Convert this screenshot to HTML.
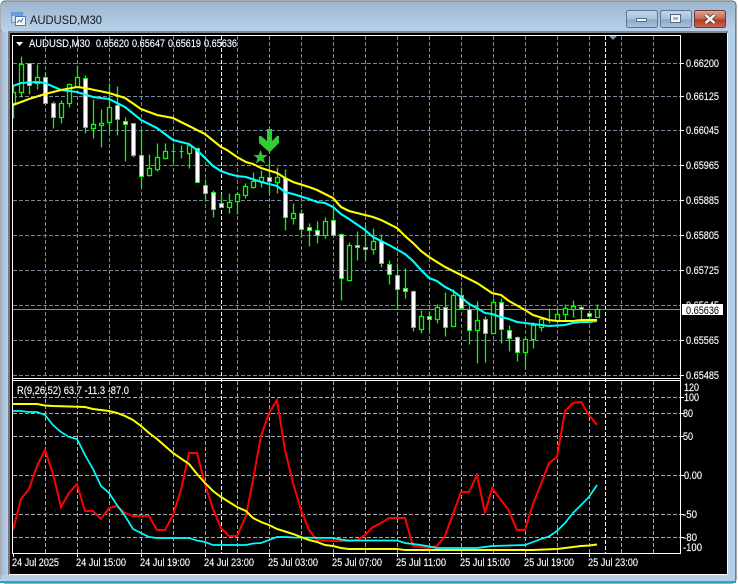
<!DOCTYPE html>
<html lang="en"><head><meta charset="utf-8"><title>AUDUSD,M30</title>
<style>html,body{margin:0;padding:0;background:#fff;width:738px;height:584px;overflow:hidden}svg{display:block}text{font-family:"Liberation Sans",sans-serif;font-size:11px;fill:#fff;stroke:#d8ecff;stroke-width:.18px}</style></head>
<body>
<svg width="738" height="584" viewBox="0 0 738 584" xmlns="http://www.w3.org/2000/svg">
<defs>
<linearGradient id="tb" x1="0" y1="0" x2="0" y2="1"><stop offset="0" stop-color="#9bb4d0"/><stop offset="1" stop-color="#bad2eb"/></linearGradient>
<linearGradient id="sd" x1="0" y1="0" x2="1" y2="0"><stop offset="0" stop-color="#9db6d3"/><stop offset="1" stop-color="#bfd5ec"/></linearGradient>
<linearGradient id="bt" x1="0" y1="0" x2="0" y2="1"><stop offset="0" stop-color="#c3d5e8"/><stop offset=".5" stop-color="#a9c1da"/><stop offset=".55" stop-color="#8ba8c7"/><stop offset="1" stop-color="#a9c4df"/></linearGradient>
<linearGradient id="cl" x1="0" y1="0" x2="0" y2="1"><stop offset="0" stop-color="#dfa79b"/><stop offset=".5" stop-color="#c4634f"/><stop offset=".55" stop-color="#ac3a26"/><stop offset="1" stop-color="#cf6a50"/></linearGradient>
<clipPath id="mc"><rect x="13" y="36" width="667" height="342"/></clipPath>
<clipPath id="sc"><rect x="13" y="381" width="667" height="172"/></clipPath>
</defs>
<rect width="738" height="584" fill="#fff"/>
<rect x="1" y="1" width="735" height="582" rx="4" fill="#b9d1ea" stroke="#55595e"/>
<rect x="1" y="2" width="734" height="30" rx="3" fill="url(#tb)"/>
<rect x="1" y="32" width="8" height="549" fill="url(#sd)"/>
<rect x="728" y="32" width="7" height="549" fill="#b2d0ee"/>
<rect x="1" y="575" width="734" height="6" fill="#b9cfe8"/>
<rect x="0" y="581" width="736" height="2" fill="#2ba3c4"/>
<rect x="735" y="8" width="1" height="574" fill="#4d8fb0"/>
<rect x="8" y="31" width="720" height="2" fill="#7f8790"/>
<rect x="8" y="32" width="2" height="543" fill="#75787c"/>
<rect x="727" y="33" width="1" height="542" fill="#fff"/>
<rect x="9" y="574" width="719" height="1" fill="#fff"/>
<rect x="10" y="33" width="717" height="541" fill="#000"/>
<!-- title icon -->
<rect x="11.5" y="12.5" width="11" height="10" fill="#c6dcf3" stroke="#5f93d0"/>
<rect x="15.5" y="16.5" width="10" height="9" fill="#fff" stroke="#3f7dc6"/>
<path d="M17 23l2-3 2 2 2-4" fill="none" stroke="#3d74b8"/>
<rect x="12" y="13" width="10" height="3" fill="#6f9fd8"/>
<text x="30" y="24" textLength="72" lengthAdjust="spacingAndGlyphs" style="font-size:12px;fill:#14181e;stroke:none">AUDUSD,M30</text>
<!-- buttons -->
<rect x="626.5" y="10.5" width="31" height="17" rx="2" fill="url(#bt)" stroke="#5b7593"/>
<rect x="636.5" y="18.5" width="10" height="3" fill="#f3f6fa" stroke="#5f6f80"/>
<rect x="660.5" y="10.5" width="31" height="17" rx="2" fill="url(#bt)" stroke="#5b7593"/>
<rect x="670.5" y="14.5" width="10" height="8" fill="#f3f6fa" stroke="#5a6878"/>
<rect x="673" y="17" width="5" height="3" fill="#9db6d0"/>
<rect x="694.5" y="10.5" width="31" height="17" rx="2" fill="url(#cl)" stroke="#6b3b38"/>
<path d="M705.5 15l9 8M714.5 15l-9 8" stroke="#3f2a2a" stroke-width="4"/>
<path d="M705.5 15l9 8M714.5 15l-9 8" stroke="#f4f4f4" stroke-width="2.6"/>
<!-- grid -->
<g fill="none" stroke="#77889a" stroke-dasharray="4 2" shape-rendering="crispEdges">
<path d="M13 63.5H680M13 96.5H680M13 130.5H680M13 165.5H680M13 200.5H680M13 235.5H680M13 270.5H680M13 305.5H680M13 340.5H680M13 375.5H680"/>
<path d="M45.5 36V378M77.5 36V378M109.5 36V378M141.5 36V378M173.5 36V378M205.5 36V378M237.5 36V378M269.5 36V378M301.5 36V378M333.5 36V378M365.5 36V378M397.5 36V378M429.5 36V378M461.5 36V378M493.5 36V378M525.5 36V378M557.5 36V378M589.5 36V378M621.5 36V378M653.5 36V378"/>
</g>
<g fill="none" stroke="#a3abb3" stroke-dasharray="4 2" shape-rendering="crispEdges">
<path d="M13 397.5H680M13 413.5H680M13 436.5H680M13 475.5H680M13 514.5H680M13 537.5H680"/>
<path d="M45.5 381V553M77.5 381V553M109.5 381V553M141.5 381V553M173.5 381V553M205.5 381V553M237.5 381V553M269.5 381V553M301.5 381V553M333.5 381V553M365.5 381V553M397.5 381V553M429.5 381V553M461.5 381V553M493.5 381V553M525.5 381V553M557.5 381V553M589.5 381V553M621.5 381V553M653.5 381V553"/>
</g>
<g fill="none" stroke="#fff" stroke-dasharray="4 2" shape-rendering="crispEdges">
<path d="M221.5 36V553M605.5 36V553"/>
</g>
<path d="M13 309.5H680" stroke="#868d95" shape-rendering="crispEdges"/>
<path d="M609 36h8l-4 4z" fill="#7d8c9c"/>
<!-- candles -->
<g clip-path="url(#mc)">
<g transform="translate(.5 .5)" stroke="#00ff00" stroke-width="1" stroke-linejoin="miter" shape-rendering="crispEdges">
<path fill="none" stroke-width="1.3" shape-rendering="auto" d="M13 84V118M21 56V97M29 63V94M37 64V89M45 72V103M53 101V128M61 100V123M69 83V107M77 65V87M85 75V133M93 99V138M101 109V147M109 83V132M117 86V135M125 117V161M133 123V157M141 130V187M149 154V176M157 143V171M165 143V159M173 143V163M181 145V158M189 145V168M197 148V182M205 179V200M213 190V217M221 193V207M229 193V213M237 192V214M245 183V198M253 172V188M261 170V187M269 159V193M277 167V193M285 169V230M293 203V224M301 209V237M309 223V246M317 221V243M325 217V238M333 208V236M341 233V300M349 242V281M357 231V260M365 225V260M373 228V254M381 234V267M389 260V284M397 263V309M405 268V298M413 290V331M421 310V333M429 311V331M437 304V323M445 292V336M453 289V326M461 287V308M469 302V344M477 301V363M485 316V362M493 298V333M501 298V343M509 325V351M517 336V361M525 337V368M533 322V348M541 317V331M549 308V323M557 308V323M565 304V320M573 300V317M581 305V319M589 310V322M597 304V317"/>
<path fill="#000" stroke-width="1.3" shape-rendering="auto" d="M11 92h4V103h-4zM19 64h4V92h-4zM35 77h4V83h-4zM59 103h4V117h-4zM67 84h4V103h-4zM75 77h4V87h-4zM91 124h4V128h-4zM99 123h4V125h-4zM107 107h4V122h-4zM147 168h4V175h-4zM155 157h4V169h-4zM163 151h4V158h-4zM187 145h4V153h-4zM227 202h4V207h-4zM235 194h4V201h-4zM243 186h4V195h-4zM251 181h4V187h-4zM259 177h4V181h-4zM275 177h4V182h-4zM291 213h4V218h-4zM323 221h4V235h-4zM347 245h4V280h-4zM371 241h4V249h-4zM419 316h4V329h-4zM435 307h4V319h-4zM451 295h4V326h-4zM475 320h4V330h-4zM491 302h4V333h-4zM523 339h4V352h-4zM531 325h4V339h-4zM539 319h4V327h-4zM555 314h4V320h-4zM563 308h4V314h-4zM571 306h4V309h-4zM595 309h4V317h-4z"/>
<path fill="none" d="M171 151h4M179 151h4M547 320h4"/>
<path fill="#fff" d="M27 63h4V85h-4zM43 77h4V103h-4zM51 103h4V117h-4zM83 78h4V127h-4zM115 105h4V119h-4zM123 121h4V124h-4zM131 123h4V155h-4zM139 155h4V176h-4zM195 148h4V182h-4zM203 185h4V193h-4zM211 192h4V209h-4zM219 203h4V207h-4zM267 177h4V181h-4zM283 178h4V217h-4zM299 213h4V229h-4zM307 227h4V230h-4zM315 230h4V235h-4zM331 220h4V235h-4zM339 234h4V278h-4zM355 245h4V247h-4zM363 247h4V249h-4zM379 241h4V263h-4zM387 264h4V274h-4zM395 275h4V289h-4zM403 288h4V291h-4zM411 291h4V327h-4zM427 316h4V319h-4zM443 307h4V327h-4zM459 295h4V308h-4zM467 309h4V330h-4zM483 319h4V333h-4zM499 302h4V329h-4zM507 330h4V338h-4zM515 337h4V352h-4zM579 307h4V309h-4zM587 313h4V316h-4z"/>
</g>
<polyline fill="none" stroke="#00ffff" stroke-width="2.1" points="13,86 21,83 37,82 45,83 61,90 77,92 93,97 109,99 125,107 141,120 157,128 173,140 189,144 197,150 205,158 213,166 221,171 229,174 237,176 246,177 261,182 277,186 285,192 293,194 309,199 317,202 325,203 333,207 341,214 349,219 365,230 373,237 381,241 389,245 405,254 413,261 421,270 429,278 437,281 445,287 453,291 461,297 469,304 477,308 485,313 492,314 501,317 509,319 517,322 525,323 533,324 549,326 565,325 573,323 581,322 589,322 597,321"/>
<polyline fill="none" stroke="#ffff00" stroke-width="2.1" points="13,105 29,99 45,94 61,90 77,87 85,88 109,93 125,98 141,109 157,115 173,118 189,126 205,134 221,147 227,150 237,157 246,162 253,164 261,168 277,173 285,178 293,182 309,187 317,190 333,198 341,207 349,211 357,213 373,217 381,220 397,228 405,236 413,243 421,251 429,257 445,267 461,275 477,283 492,293 501,295 509,301 525,310 533,315 549,320 557,321 573,321 581,320 597,320"/>
</g>
<!-- arrow + star -->
<path d="M267 129h5V141l5-5h2V143L270 152h-1L259 143V136h2l6 5z" fill="#2fce35"/>
<path d="M260.500 150l2 5h5l-4 3.400 1.600 5.100-4.600-3-4.600 3 1.600-5.100-4-3.400h5z" fill="#33c03a"/>
<!-- indicator -->
<g clip-path="url(#sc)" fill="none">
<polyline stroke="#ff0000" stroke-width="2" points="13,530 21,499 29,489 37,466 45,450 53,474 61,507 69,493 77,484 85,511 93,511 101,519 109,508 117,506 125,513 133,516 149,516 157,530 165,530 173,515 181,490 189,453 197,453 205,484 213,509 221,528 229,536 237,536 246,516 253,480 261,436 269,413 277,400 285,450 293,483 301,510 309,530 317,540 333,541 349,541 357,540 365,535 373,527 381,523 389,518 405,518 413,546 421,547 429,548 437,546 445,536 453,514 461,492 469,492 477,475 485,513 492,488 501,500 508,509 517,530 525,530 533,504 541,484 549,463 557,457 565,411 573,403 581,402 589,415 597,425"/>
<polyline stroke="#00ffff" stroke-width="1.7" points="13,411 21,411 29,412 37,412 45,415 53,425 61,432 69,437 77,439 85,455 93,469 101,486 109,493 117,505 125,516 133,529 141,533 149,537 157,538 189,538 197,540.500 205,542 213,545 246,545 253,543.500 261,543 269,540 277,537 285,537 293,537.500 333,538 341,539.500 349,540.500 397,540.500 405,543 421,545 437,548 477,548 485,547 492,546 525,545 533,542 541,539 549,536.500 557,531 565,523 573,513 581,505 589,497 597,485"/>
<polyline stroke="#ffff00" stroke-width="2" points="13,404 37,404 45,405.500 53,406 85,407 93,409 109,411 117,413 125,416 133,420 141,426 149,433 157,439 173,453 189,464 197,474 205,483 213,491 221,497 237,507 246,511 253,518 261,522 269,525 277,529 293,534 309,540 317,542 325,545 333,546 341,548 349,549 397,549 405,550 533,550 557,549 565,548 573,547 581,546 589,545.500 597,544.500"/>
</g>
<!-- frames -->
<g stroke="#fff" fill="none" shape-rendering="crispEdges">
<path d="M12.500 35V553.500M12 35.500H681M680.500 35V554M12 378.500H681M12 380.500H681M12 553.500H681"/>
<path d="M681 63.500h3M681 96.500h3M681 130.500h3M681 165.500h3M681 200.500h3M681 235.500h3M681 270.500h3M681 340.500h3M681 375.500h3M681 397.500h3M681 413.500h3M681 436.500h3M681 475.500h3M681 514.500h3M681 537.500h3"/>
<path d="M13.500 554v3M77.500 554v3M141.500 554v3M205.500 554v3M269.500 554v3M333.500 554v3M397.500 554v3M461.500 554v3M525.500 554v3M589.500 554v3"/>
</g>
<!-- header text -->
<path d="M16 42h7l-3.500 4z" fill="#fff"/>
<text x="29" y="47" textLength="61" lengthAdjust="spacingAndGlyphs">AUDUSD,M30</text>
<text x="96" y="47" textLength="33" lengthAdjust="spacingAndGlyphs">0.65620</text>
<text x="132" y="47" textLength="33" lengthAdjust="spacingAndGlyphs">0.65647</text>
<text x="168" y="47" textLength="33" lengthAdjust="spacingAndGlyphs">0.65619</text>
<text x="204" y="47" textLength="33" lengthAdjust="spacingAndGlyphs">0.65636</text>
<text x="17" y="394" textLength="112" lengthAdjust="spacingAndGlyphs">R(9,26,52) 63.7 -11.3 -87.0</text>
<!-- price axis -->
<g>
<text x="686" y="67" textLength="33" lengthAdjust="spacingAndGlyphs">0.66200</text>
<text x="686" y="100" textLength="33" lengthAdjust="spacingAndGlyphs">0.66125</text>
<text x="686" y="134" textLength="33" lengthAdjust="spacingAndGlyphs">0.66045</text>
<text x="686" y="169" textLength="33" lengthAdjust="spacingAndGlyphs">0.65965</text>
<text x="686" y="204" textLength="33" lengthAdjust="spacingAndGlyphs">0.65885</text>
<text x="686" y="239" textLength="33" lengthAdjust="spacingAndGlyphs">0.65805</text>
<text x="686" y="274" textLength="33" lengthAdjust="spacingAndGlyphs">0.65725</text>
<text x="686" y="309" textLength="33" lengthAdjust="spacingAndGlyphs">0.65645</text>
<text x="686" y="344" textLength="33" lengthAdjust="spacingAndGlyphs">0.65565</text>
<text x="686" y="379" textLength="33" lengthAdjust="spacingAndGlyphs">0.65485</text>
</g>
<rect x="682" y="304" width="41" height="11" fill="#fff"/>
<text x="686" y="314" textLength="33" lengthAdjust="spacingAndGlyphs" style="fill:#000;stroke:none">0.65636</text>
<g>
<text x="684" y="391" textLength="15" lengthAdjust="spacingAndGlyphs">120</text>
<text x="684" y="401" textLength="15" lengthAdjust="spacingAndGlyphs">100</text>
<text x="683" y="417" textLength="10" lengthAdjust="spacingAndGlyphs">80</text>
<text x="683" y="440" textLength="10" lengthAdjust="spacingAndGlyphs">50</text>
<text x="684" y="479" textLength="18" lengthAdjust="spacingAndGlyphs">0.00</text>
<text x="683" y="518" textLength="14" lengthAdjust="spacingAndGlyphs">-50</text>
<text x="683" y="541" textLength="14" lengthAdjust="spacingAndGlyphs">-80</text>
<text x="683" y="551" textLength="19" lengthAdjust="spacingAndGlyphs">-100</text>
</g>
<!-- time axis -->
<g>
<text x="12" y="566" textLength="47" lengthAdjust="spacingAndGlyphs">24 Jul 2025</text>
<text x="76" y="566" textLength="50" lengthAdjust="spacingAndGlyphs">24 Jul 15:00</text>
<text x="140" y="566" textLength="50" lengthAdjust="spacingAndGlyphs">24 Jul 19:00</text>
<text x="204" y="566" textLength="50" lengthAdjust="spacingAndGlyphs">24 Jul 23:00</text>
<text x="268" y="566" textLength="50" lengthAdjust="spacingAndGlyphs">25 Jul 03:00</text>
<text x="332" y="566" textLength="50" lengthAdjust="spacingAndGlyphs">25 Jul 07:00</text>
<text x="396" y="566" textLength="50" lengthAdjust="spacingAndGlyphs">25 Jul 11:00</text>
<text x="460" y="566" textLength="50" lengthAdjust="spacingAndGlyphs">25 Jul 15:00</text>
<text x="524" y="566" textLength="50" lengthAdjust="spacingAndGlyphs">25 Jul 19:00</text>
<text x="588" y="566" textLength="50" lengthAdjust="spacingAndGlyphs">25 Jul 23:00</text>
</g>
</svg>
</body></html>
